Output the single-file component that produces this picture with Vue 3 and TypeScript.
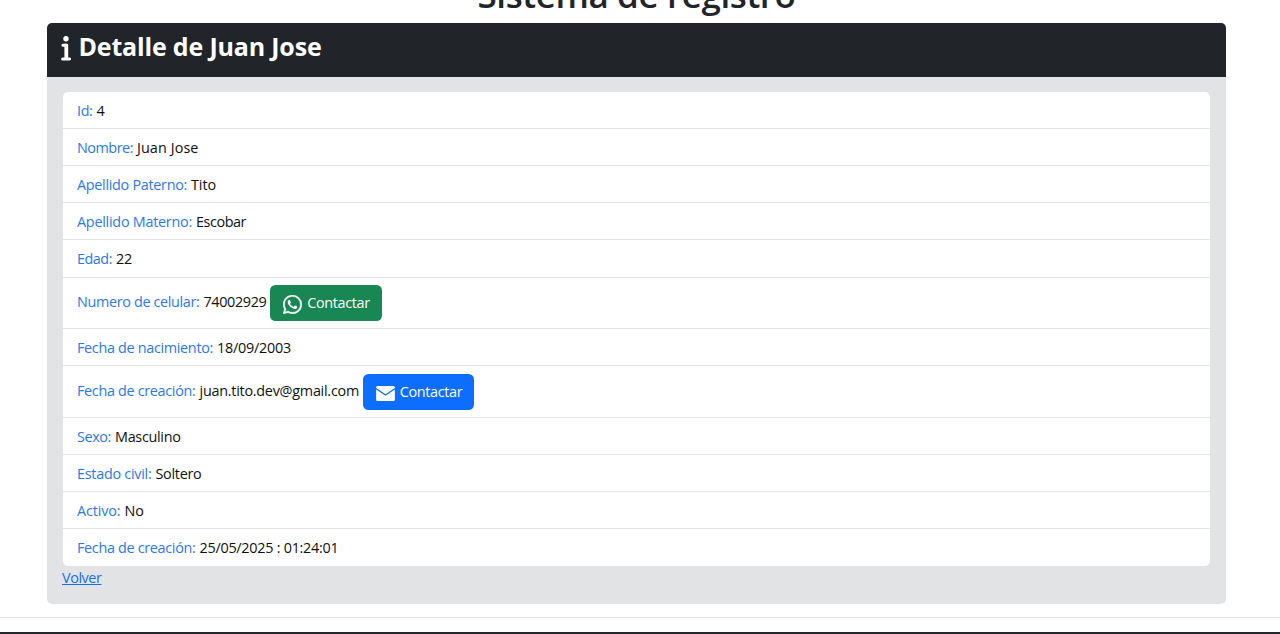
<script setup lang="ts">
interface Field {
  label: string
  value: string
  labelWidth: number
  valueWidth: number
  action?: 'whatsapp' | 'mail'
}

const fields: Field[] = [
  { label: 'Id:', value: '4', labelWidth: 15.5, valueWidth: 8 },
  { label: 'Nombre:', value: 'Juan Jose', labelWidth: 56, valueWidth: 61.5 },
  { label: 'Apellido Paterno:', value: 'Tito', labelWidth: 110, valueWidth: 25 },
  { label: 'Apellido Materno:', value: 'Escobar', labelWidth: 115, valueWidth: 50 },
  { label: 'Edad:', value: '22', labelWidth: 35, valueWidth: 16 },
  { label: 'Numero de celular:', value: '74002929', labelWidth: 122.5, valueWidth: 63, action: 'whatsapp' },
  { label: 'Fecha de nacimiento:', value: '18/09/2003', labelWidth: 136, valueWidth: 74 },
  { label: 'Fecha de creación:', value: 'juan.tito.dev@gmail.com', labelWidth: 118.5, valueWidth: 159.5, action: 'mail' },
  { label: 'Sexo:', value: 'Masculino', labelWidth: 34, valueWidth: 65.5 },
  { label: 'Estado civil:', value: 'Soltero', labelWidth: 74.5, valueWidth: 46 },
  { label: 'Activo:', value: 'No', labelWidth: 43.5, valueWidth: 19.5 },
  { label: 'Fecha de creación:', value: '25/05/2025 : 01:24:01', labelWidth: 118.5, valueWidth: 139 },
]

// Spreads the difference between the natural and the wanted width over the glyphs.
const vFit = {
  mounted(el: HTMLElement, binding: { value: number }) {
    const apply = () => {
      el.style.letterSpacing = '0'
      const natural = el.getBoundingClientRect().width
      const count = (el.textContent ?? '').trim().length
      el.style.letterSpacing = `${(binding.value - natural) / count}px`
    }
    apply()
    document.fonts.ready.then(apply)
  },
}
</script>

<template>
  <div class="page">
    <h1 class="title"><span v-fit="318">Sistema de registro</span></h1>
    <section class="card">
      <header class="card-header">
        <svg class="info" viewBox="0 0 10 25" aria-hidden="true">
          <circle cx="5" cy="2.7" r="2.7" fill="currentColor" />
          <path d="M1.9 9.2h3.2M1.6 22.9h7" fill="none" stroke="currentColor" stroke-width="3" stroke-linecap="round" />
          <path d="M3.4 7.7h2.4a1.4 1.4 0 0 1 1.4 1.4v14H3.4z" fill="currentColor" />
        </svg>
        <h2><span v-fit="243">Detalle de Juan Jose</span></h2>
      </header>
      <div class="card-body">
        <ul class="list">
          <li v-for="(f, i) in fields" :key="i" class="row" :class="{ tall: f.action }">
            <span v-fit="f.labelWidth" class="label">{{ f.label }}</span>
            <span v-fit="f.valueWidth" class="value">{{ f.value }}</span>
            <a v-if="f.action" class="button" :class="f.action" href="#">
              <svg v-if="f.action === 'whatsapp'" class="wa-icon" viewBox="0 0 16 16" aria-hidden="true">
                <path fill="currentColor" stroke="currentColor" stroke-width=".25" d="M13.601 2.326A7.854 7.854 0 0 0 7.994 0C3.627 0 .068 3.558.064 7.926c0 1.399.366 2.76 1.057 3.965L0 16l4.204-1.102a7.933 7.933 0 0 0 3.79.965h.004c4.368 0 7.926-3.558 7.93-7.93A7.898 7.898 0 0 0 13.6 2.326zM7.994 14.521a6.573 6.573 0 0 1-3.356-.92l-.24-.144-2.494.654.666-2.433-.156-.251a6.56 6.56 0 0 1-1.007-3.505c0-3.626 2.957-6.584 6.591-6.584a6.56 6.56 0 0 1 4.66 1.931 6.557 6.557 0 0 1 1.928 4.66c-.004 3.639-2.961 6.592-6.592 6.592z" />
                <path fill="currentColor" d="M11.603 9.583c-.197-.099-1.17-.578-1.353-.646-.182-.065-.315-.099-.445.099-.133.197-.513.646-.627.775-.114.133-.232.148-.43.05-.197-.1-.836-.308-1.592-.985-.59-.525-.985-1.175-1.103-1.372-.114-.198-.011-.304.088-.403.087-.088.197-.232.296-.346.1-.114.133-.198.198-.33.065-.134.034-.248-.015-.347-.05-.099-.445-1.076-.612-1.47-.16-.389-.323-.335-.445-.34-.114-.007-.247-.007-.38-.007a.729.729 0 0 0-.529.247c-.182.198-.691.677-.691 1.654 0 .977.71 1.916.81 2.049.098.133 1.394 2.132 3.383 2.992.47.205.84.326 1.129.418.475.152.904.129 1.246.08.38-.058 1.171-.48 1.338-.943.164-.464.164-.86.114-.943-.049-.084-.182-.133-.38-.232z" />
              </svg>
              <svg v-else class="mail-icon" viewBox="0 0 20 16" aria-hidden="true">
                <path fill="currentColor" d="M1.6 0h16.8A1.6 1.6 0 0 1 20 1.6v.5l-10 6.6L0 2.1v-.5A1.6 1.6 0 0 1 1.6 0zM0 3.8l10 6.7 10-6.7v10.6a1.6 1.6 0 0 1-1.6 1.6H1.6A1.6 1.6 0 0 1 0 14.4z" />
              </svg>
              <span v-fit="62.5">Contactar</span>
            </a>
          </li>
        </ul>
        <a class="back" href="#"><span v-fit="39.5">Volver</span></a>
      </div>
    </section>
    <footer class="footer"></footer>
  </div>
</template>

<style>
html,
body {
  overflow: hidden;
}
</style>

<style scoped>
* {
  box-sizing: border-box;
}
.page {
  height: 634px;
  display: flex;
  flex-direction: column;
  overflow: hidden;
  background: #fff;
  color: #212529;
  font-family: "Segoe UI", "Open Sans", "Noto Sans", sans-serif;
  font-size: 14.4px;
}
.title {
  flex: none;
  height: 47px;
  margin: -24px 0 0;
  padding-right: 7px;
  text-align: center;
  font-size: 35px;
  line-height: 38px;
  font-weight: 600;
  white-space: nowrap;
}
.card {
  flex: none;
  width: 1179px;
  height: 580.5px;
  margin-left: 47px;
  border-radius: 5px;
  overflow: hidden;
  background: #e2e3e5;
}
.card-header {
  display: flex;
  height: 53.5px;
  padding: 12.5px 14px 0;
  background: #212529;
  color: #fff;
}
.info {
  flex: none;
  width: 10px;
  height: 25px;
  margin-right: 7.5px;
}
.card-header h2 {
  margin: -4.5px 0 0;
  font-size: 25px;
  line-height: 30px;
  font-weight: 700;
  white-space: nowrap;
}
.card-body {
  padding: 15px 16px 0;
}
.list {
  margin: 0;
  padding: 0.3px 0 0;
  list-style: none;
  border-radius: 5px;
  background: #fff;
  overflow: hidden;
}
.row {
  display: flex;
  align-items: flex-start;
  gap: 4px;
  height: 37.15px;
  padding: 8px 14px 0;
  border-bottom: 1px solid #e2e4e6;
  line-height: 22px;
  white-space: nowrap;
}
.row:last-child {
  height: 36.8px;
  border-bottom: 0;
}
.tall {
  height: 51.6px;
}
.tall .label,
.tall .value {
  margin-top: 5.4px;
}
.label {
  color: #2f77ea;
}
.value {
  color: #111;
}
.button {
  display: flex;
  align-items: center;
  width: 111.5px;
  height: 36px;
  margin: -0.5px 0 0 -0.5px;
  padding-left: 13.3px;
  border-radius: 5.5px;
  color: #fff;
  text-decoration: none;
}
.whatsapp {
  background: #198754;
}
.mail {
  background: #0d6efd;
}
.wa-icon {
  width: 19px;
  height: 19px;
  margin: 3px 5px 0 0;
}
.mail-icon {
  width: 19px;
  height: 15px;
  margin: 3px 5px 0 0;
}
.back {
  display: block;
  width: max-content;
  margin: 1px 0 0 -1px;
  color: #1b6df0;
  line-height: 22px;
}
.footer {
  height: 17px;
  flex: none;
  margin-top: 13.5px;
  border-top: 1px solid #e6e7e9;
  border-bottom: 2px solid #24262b;
}
</style>
